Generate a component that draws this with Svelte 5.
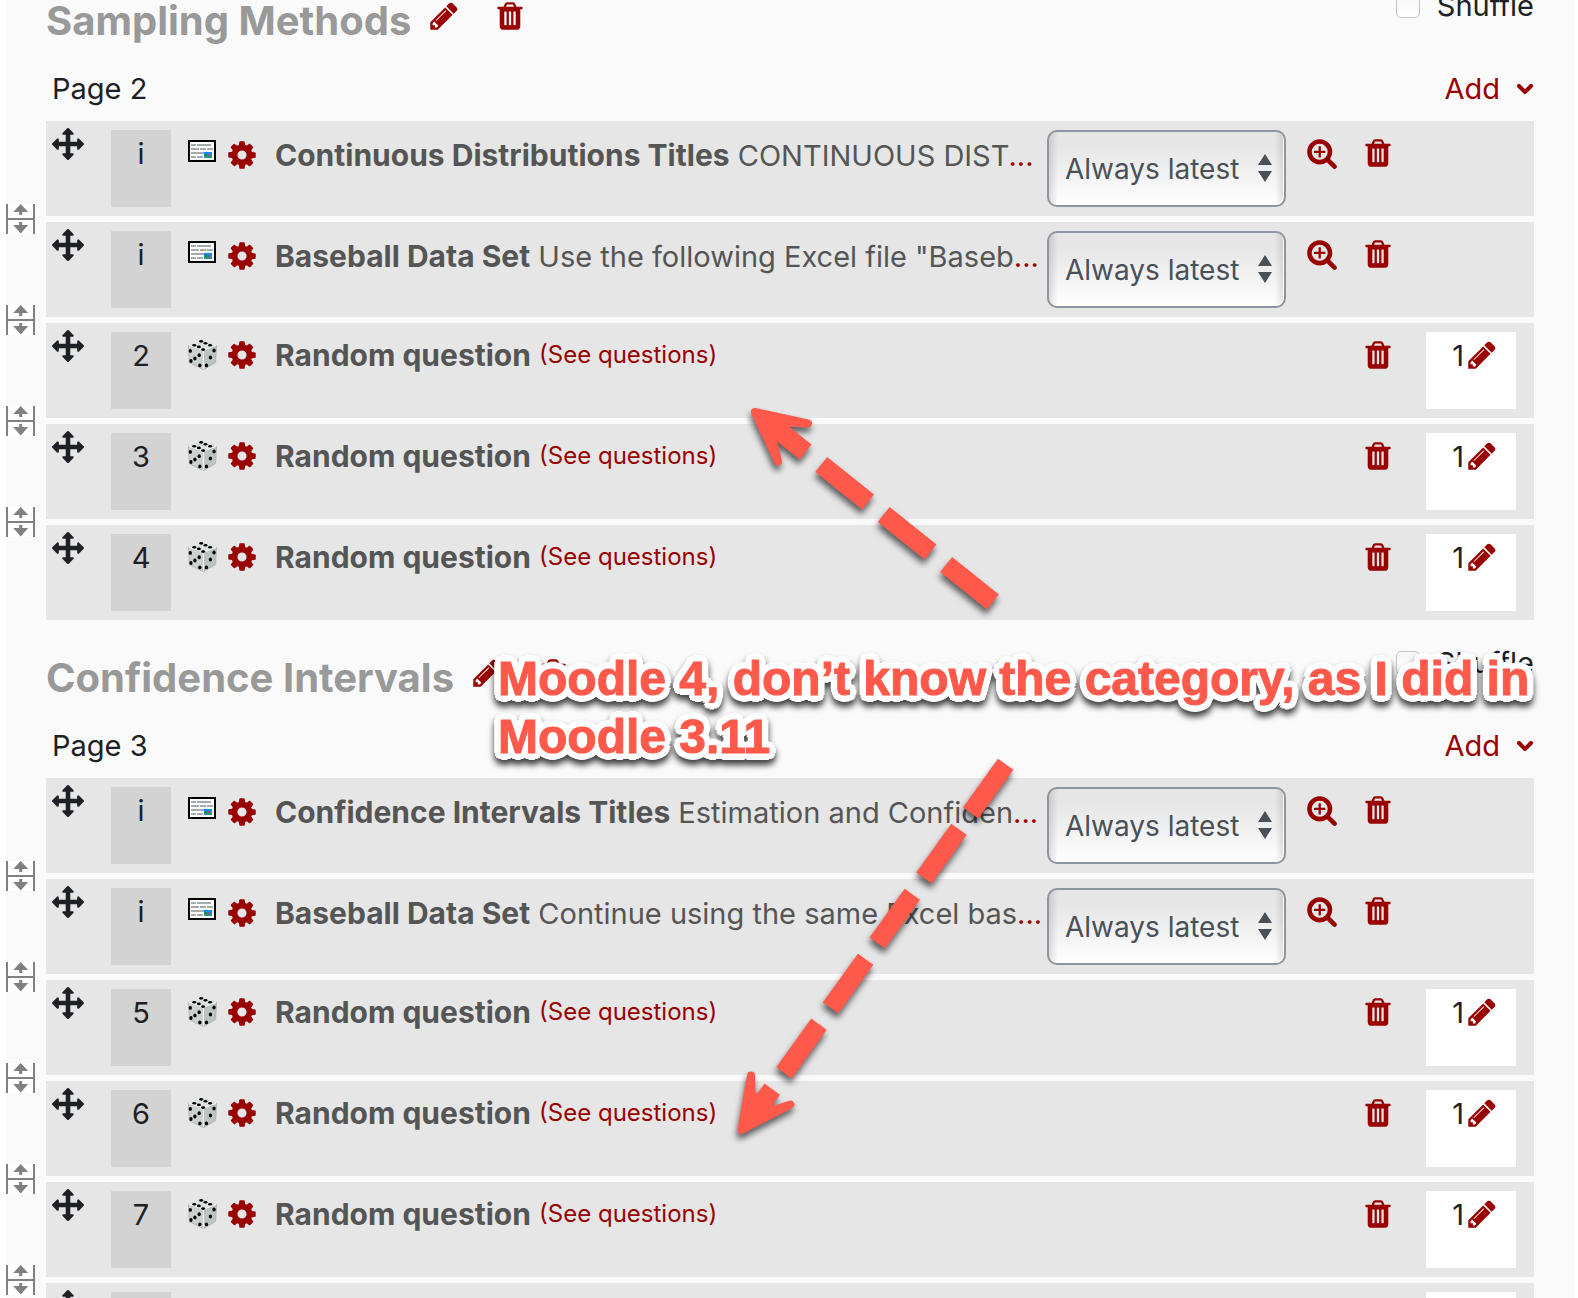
<script>
  const sections = [
    {
      id: 'sampling',
      title: 'Sampling Methods',
      page: 'Page 2',
      slots: [
        { number: 'i', name: 'Continuous Distributions Titles', text: 'CONTINUOUS DIST' },
        { number: 'i', name: 'Baseball Data Set', text: 'Use the following Excel file "Baseb' },
        { number: '2', random: true },
        { number: '3', random: true },
        { number: '4', random: true },
      ],
    },
    {
      id: 'confidence',
      title: 'Confidence Intervals',
      page: 'Page 3',
      slots: [
        { number: 'i', name: 'Confidence Intervals Titles', text: 'Estimation and Confiden' },
        { number: 'i', name: 'Baseball Data Set', text: 'Continue using the same Excel bas' },
        { number: '5', random: true },
        { number: '6', random: true },
        { number: '7', random: true },
        { number: '8', random: true },
      ],
    },
  ];

  const icons = {
    pencil: 'M491 1536l91-91-235-235-91 91v107h128v128h107zm523-928q0-22-22-22-10 0-17 7l-542 542q-7 7-7 17 0 22 22 22 10 0 17-7l542-542q7-7 7-17zm-54-192l416 416-832 832h-416v-416zm683 96q0 53-37 90l-166 166-416-416 166-165q36-38 90-38 53 0 91 38l235 234q37 39 37 91z',
    trash: 'M704 1376v-704q0-14-9-23t-23-9h-64q-14 0-23 9t-9 23v704q0 14 9 23t23 9h64q14 0 23-9t9-23zm256 0v-704q0-14-9-23t-23-9h-64q-14 0-23 9t-9 23v704q0 14 9 23t23 9h64q14 0 23-9t9-23zm256 0v-704q0-14-9-23t-23-9h-64q-14 0-23 9t-9 23v704q0 14 9 23t23 9h64q14 0 23-9t9-23zm-544-992h448l-48-117q-7-9-17-11h-317q-10 2-17 11zm928 32v64q0 14-9 23t-23 9h-96v948q0 83-47 143.5t-113 60.5h-832q-66 0-113-58.5t-47-141.5v-952h-96q-14 0-23-9t-9-23v-64q0-14 9-23t23-9h309l70-167q15-37 54-63t79-26h320q40 0 79 26t54 63l70 167h309q14 0 23 9t9 23z',
    cog: 'M1152 896q0-106-75-181t-181-75-181 75-75 181 75 181 181 75 181-75 75-181zm512-109v222q0 12-8 23t-20 13l-185 28q-19 54-39 91 35 50 107 138 10 12 10 25t-9 23q-27 37-99 108t-94 71q-12 0-26-9l-138-108q-44 23-91 38-16 136-29 186-7 28-36 28h-222q-14 0-24.5-8.5t-11.5-21.5l-28-184q-49-16-90-37l-141 107q-10 9-25 9-14 0-25-11-126-114-165-168-7-10-7-23 0-12 8-23 15-21 51-66.5t54-70.5q-27-50-41-99l-183-27q-13-2-21-12.5t-8-23.5v-222q0-12 8-23t19-13l186-28q14-46 39-92-40-57-107-138-10-12-10-24 0-10 9-23 26-36 98.5-107.5t94.5-71.5q13 0 26 10l138 107q44-23 91-38 16-136 29-186 7-28 36-28h222q14 0 24.5 8.5t11.5 21.5l28 184q49 16 90 37l142-107q9-9 24-9 13 0 25 10 129 119 165 170 7 8 7 22 0 12-8 23-15 21-51 66.5t-54 70.5q26 50 41 98l183 28q13 2 21 12.5t8 23.5z',
    zoom: 'M1088 800v64q0 13-9.5 22.5t-22.5 9.5h-224v224q0 13-9.5 22.5t-22.5 9.5h-64q-13 0-22.5-9.5t-9.5-22.5v-224h-224q-13 0-22.5-9.5t-9.5-22.5v-64q0-13 9.5-22.5t22.5-9.5h224v-224q0-13 9.5-22.5t22.5-9.5h64q13 0 22.5 9.5t9.5 22.5v224h224q13 0 22.5 9.5t9.5 22.5zm128 32q0-185-131.5-316.5t-316.5-131.5-316.5 131.5-131.5 316.5 131.5 316.5 316.5 131.5 316.5-131.5 131.5-316.5zm512 832q0 53-37.5 90.5t-90.5 37.5q-54 0-90-38l-343-342q-179 124-399 124-143 0-273.5-55.5t-225-150-150-225-55.5-273.5 55.5-273.5 150-225 225-150 273.5-55.5 273.5 55.5 225 150 150 225 55.5 273.5q0 220-124 399l343 343q37 37 37 90z',
    move: 'M1792 896q0 26-19 45l-256 256q-19 19-45 19t-45-19-19-45v-128h-384v384h128q26 0 45 19t19 45-19 45l-256 256q-19 19-45 19t-45-19l-256-256q-19-19-19-45t19-45 45-19h128v-384h-384v128q0 26-19 45t-45 19-45-19l-256-256q-19-19-19-45t19-45l256-256q19-19 45-19t45 19 19 45v128h384v-384h-128q-26 0-45-19t-19-45 19-45l256-256q19-19 45-19t45 19l256 256q19 19 19 45t-19 45-45 19h-128v384h384v-128q0-26 19-45t45-19 45 19l256 256q19 19 19 45z',
  };

  // pip centres on the three visible faces of the die
  const topPips = [[40, 7], [53, 13], [67, 19], [19, 19], [33, 24], [46, 32]];
  const sidePips = [[7, 36], [34, 49], [21, 59], [9, 67], [36, 80], [79, 35], [68, 56], [56, 80]];
</script>

{#snippet icon(name)}
  <svg class="icon" viewBox="0 0 1792 1792" aria-hidden="true"><path d={icons[name]} /></svg>
{/snippet}

{#snippet iconButton(name, label)}
  <button class="icon-button" type="button" aria-label={label}>{@render icon(name)}</button>
{/snippet}

<main class="page">
  <div class="quiz">
    {#each sections as section (section.id)}
      <section class="section">
        <header class="section-head">
          <h3>{section.title}</h3>
          <div class="head-actions">
            {@render iconButton('pencil', 'Edit heading')}
            {@render iconButton('trash', 'Remove heading')}
          </div>
          <label class="shuffle"><input type="checkbox" />Shuffle</label>
        </header>

        <div class="page-row">
          <span>{section.page}</span>
          <button class="add" type="button">
            Add
            <svg width="16" height="10" viewBox="0 0 16 10" aria-hidden="true"><path d="M2 2l6 6 6-6" /></svg>
          </button>
        </div>

        <ul class="slots">
          {#each section.slots as slot, i}
            <li class="slot" class:random={slot.random}>
              <button class="icon-button move" type="button" aria-label="Move">{@render icon('move')}</button>
              <span class="number">{slot.number}</span>

              {#if slot.random}
                <svg class="type" width="29" height="31" viewBox="0 0 88 94" aria-hidden="true">
                  <path fill="#dde2e0" d="M43 1l44 17-40 16L1 18z" />
                  <path fill="#cbd1cf" d="M1 18l46 16v59L4 72z" />
                  <path fill="#bcc4c1" d="M87 18L47 34v59l37-22z" />
                  <path fill="none" stroke="#f6f8f7" stroke-width="3" d="M3 19l44 15 39-15M47 34v57" />
                  <path fill="none" stroke="#a3aaa7" stroke-width="2" d="M1 18l3 54 43 21 37-22 3-53" />
                  {#each topPips as [x, y]}<ellipse cx={x} cy={y} rx="6" ry="4" />{/each}
                  {#each sidePips as [x, y]}<ellipse cx={x} cy={y} rx="5" ry="6" />{/each}
                </svg>
              {:else}
                <svg class="type" width="28" height="22" viewBox="0 0 28 22" aria-hidden="true">
                  <rect x="1" y="1" width="26" height="20" fill="#fff" stroke="#000" stroke-width="2" />
                  <path stroke="#a3abad" stroke-width="2" d="M3 5h5M9 5h14M3 9h8M12 9h6M19 9h6M3 13h13M3 17h5M9 17h6" />
                  <rect x="16" y="12" width="8" height="3" fill="#0a8cf5" />
                  <rect x="16" y="15" width="8" height="3" fill="#27918c" />
                  <rect x="17" y="14" width="2" height="2" fill="#0b8a2a" />
                  <rect x="20" y="14" width="1" height="2" fill="#c03a5a" />
                </svg>
              {/if}

              <button class="icon-button cog" type="button" aria-label="Edit question">{@render icon('cog')}</button>

              <div class="content">
                {#if slot.random}
                  <strong>Random question</strong> <a class="see" href="#questions">(See questions)</a>
                {:else}
                  <strong>{slot.name}</strong> {slot.text}<a href="#question">...</a>
                {/if}
              </div>

              {#if !slot.random}
                <div class="version">
                  <select aria-label="Question version">
                    <option>Always latest</option>
                  </select>
                  <svg class="caret" width="14" height="28" viewBox="0 0 14 28" aria-hidden="true">
                    <path d="M0 11L7 0l7 11zM0 17h14L7 28z" />
                  </svg>
                </div>
                {@render iconButton('zoom', 'Preview question')}
              {/if}
              {@render iconButton('trash', 'Delete question')}

              <div class="mark">
                {#if slot.random}
                  <span>1</span>{@render iconButton('pencil', 'Edit maximum mark')}
                {/if}
              </div>

              {#if i < section.slots.length - 1}
                <button class="split" type="button" aria-label="Insert page break">
                  <svg width="30" height="30" viewBox="0 0 30 30" aria-hidden="true">
                    <rect width="29" height="30" fill="#fff" />
                    <path d="M0 0h2v14h25V0h2v30h-2V16H2v14H0zM14.7 0l7.5 8h-6v3h-3V8h-6zM13.2 18h3v3h6l-7.5 8.5L7.2 21h6z" />
                  </svg>
                </button>
              {/if}
            </li>
          {/each}
        </ul>
      </section>
    {/each}
  </div>

  <svg class="arrows" aria-hidden="true">
    <g class="arrow">
      <path class="shaft" d="M993 602L775 427.5" />
      <path class="head" d="M755 412L808 423.5L788 422.5L773 441L778 461.5z" />
    </g>
    <g class="arrow">
      <path class="shaft" d="M1005.7 764.3L757.7 1109.4" />
      <path class="head" d="M741.5 1130L751 1075.5L751.5 1094L773 1110L790.5 1104.5z" />
    </g>
  </svg>
  <p class="note">Moodle 4, don’t know the category, as I did in<br />Moodle 3.11</p>
</main>

<style>
:global(body) {
  margin: 0;
  background: #fff;
}

.page {
  position: relative;
  height: 100vh;
  overflow: hidden;
  font-family: Inter, "Liberation Sans", sans-serif;
  font-size: 29px;
  line-height: 46px;
  color: #1d2125;
}

.quiz {
  margin: -37px 4px 0 6px;
  padding: 0 40px;
  background: #fafafa;
}

.section {
  padding-top: 24px;
}

.section-head {
  display: flex;
  align-items: flex-start;
  height: 57px;
}

h3 {
  margin: 10px 0 0;
  font-size: 40px;
  line-height: 48px;
  font-weight: 700;
  color: #999;
}

.head-actions {
  display: flex;
  gap: 34px;
  margin: 13px 0 0 17px;
}

.shuffle {
  display: flex;
  align-items: center;
  gap: 17px;
  margin-left: auto;
  line-height: 38px;
}

.shuffle input {
  appearance: none;
  width: 24px;
  height: 24px;
  margin: 0;
  border: 1px solid #c4c4c4;
  border-radius: 5px;
  background: linear-gradient(#f6f6f6, #fff);
}

.page-row {
  display: flex;
  justify-content: space-between;
  margin: 22px 0 9px;
  padding-left: 6px;
}

button {
  font: inherit;
  color: #900;
  padding: 0;
  border: none;
  background: none;
  cursor: pointer;
}

.add {
  display: flex;
  align-items: center;
  gap: 17px;
}

.add svg {
  fill: none;
  stroke: #900;
  stroke-width: 4;
  stroke-linecap: round;
  margin-right: 1px;
}

.icon-button {
  display: block;
  flex: none;
  width: 32px;
  height: 32px;
}

.icon {
  display: block;
  width: 32px;
  height: 32px;
  fill: currentColor;
}

.slots {
  display: flex;
  flex-direction: column;
  gap: 6px;
  margin: 0;
  padding: 0;
  list-style: none;
}

.slot {
  position: relative;
  display: flex;
  align-items: flex-start;
  height: 95px;
  padding: 0 18px 0 6px;
  box-sizing: border-box;
  background: #e6e6e6;
}

.slot > .icon-button {
  margin-top: 16px;
}

.slot > .move {
  margin-top: 7px;
  color: #1d2125;
}

.number {
  flex: none;
  width: 60px;
  height: 77px;
  margin: 9px 17px 0 27px;
  background: #d3d3d3;
  line-height: 48px;
  text-align: center;
}

.type {
  flex: none;
  width: 28px;
  margin: 19px 10px 0 0;
}

.random .type {
  width: 29px;
  margin: 16px 9px 0 0;
}

.slot > .cog {
  margin-top: 18px;
}

.random > .cog {
  margin-top: 16px;
}

.content {
  flex: 1;
  min-width: 0;
  margin: 11px 0 0 17px;
  white-space: nowrap;
  color: #555;
}

.random .content {
  margin-top: 9px;
}

strong {
  font-size: 30px;
}

a {
  color: #900;
  text-decoration: none;
}

.see {
  position: relative;
  bottom: 3px;
  font-size: 24px;
}

.version {
  position: relative;
  flex: none;
  margin: 9px 20px 0 0;
}

select {
  appearance: none;
  display: block;
  width: 239px;
  height: 77px;
  padding: 0 45px 0 16px;
  border: 2px solid #8f959e;
  border-radius: 10px;
  background:
    linear-gradient(90deg, rgba(0, 0, 0, 0.12), transparent 9px),
    linear-gradient(270deg, rgba(0, 0, 0, 0.12), transparent 9px),
    linear-gradient(#e6e6e6 20%, #fff);
  box-shadow: inset -1px -1px 1px #fff;
  font: inherit;
  font-size: 28px;
  color: #495057;
}

.caret {
  position: absolute;
  top: 24px;
  right: 14px;
  fill: #495057;
  pointer-events: none;
}

.version + .icon-button {
  margin-right: 24px;
}

.mark {
  display: flex;
  flex: none;
  width: 90px;
  height: 77px;
  margin: 9px 0 0 32px;
}

.random .mark {
  background: #fff;
}

.mark span {
  width: 38px;
  margin-right: 2px;
  line-height: 48px;
  text-align: right;
}

.mark .icon-button {
  margin-top: 7px;
}

.split {
  position: absolute;
  left: -40px;
  bottom: -18px;
  height: 30px;
}

.split svg {
  display: block;
  fill: #808080;
}

.arrows {
  position: absolute;
  inset: 0;
  width: 100%;
  height: 100%;
  pointer-events: none;
}

.arrow {
  fill: #ff594b;
  stroke: #ff594b;
  filter: drop-shadow(-1px 5px 3px rgba(0, 0, 0, 0.6));
}

.shaft {
  stroke-width: 19;
  stroke-dasharray: 60 20;
}

.head {
  stroke-width: 8;
  stroke-linejoin: round;
}

/* rings of hard shadows give the lettering a rounded white outline */
.note {
  position: absolute;
  top: 650px;
  left: 498px;
  margin: 0;
  font-family: "Liberation Sans", Arial, sans-serif;
  font-size: 48px;
  line-height: 58px;
  font-weight: 700;
  white-space: nowrap;
  color: #ff594b;
  -webkit-text-stroke: 1px #ff594b;
  text-shadow:
    7px 0 #fff, -7px 0 #fff, 0 7px #fff, 0 -7px #fff,
    6px 3px #fff, 6px -3px #fff, -6px 3px #fff, -6px -3px #fff,
    5px 5px #fff, 5px -5px #fff, -5px 5px #fff, -5px -5px #fff,
    3px 6px #fff, 3px -6px #fff, -3px 6px #fff, -3px -6px #fff,
    4px 0 #fff, -4px 0 #fff, 0 4px #fff, 0 -4px #fff,
    3px 3px #fff, 3px -3px #fff, -3px 3px #fff, -3px -3px #fff;
  filter: drop-shadow(0 5px 3px rgba(0, 0, 0, 0.75));
}
</style>
